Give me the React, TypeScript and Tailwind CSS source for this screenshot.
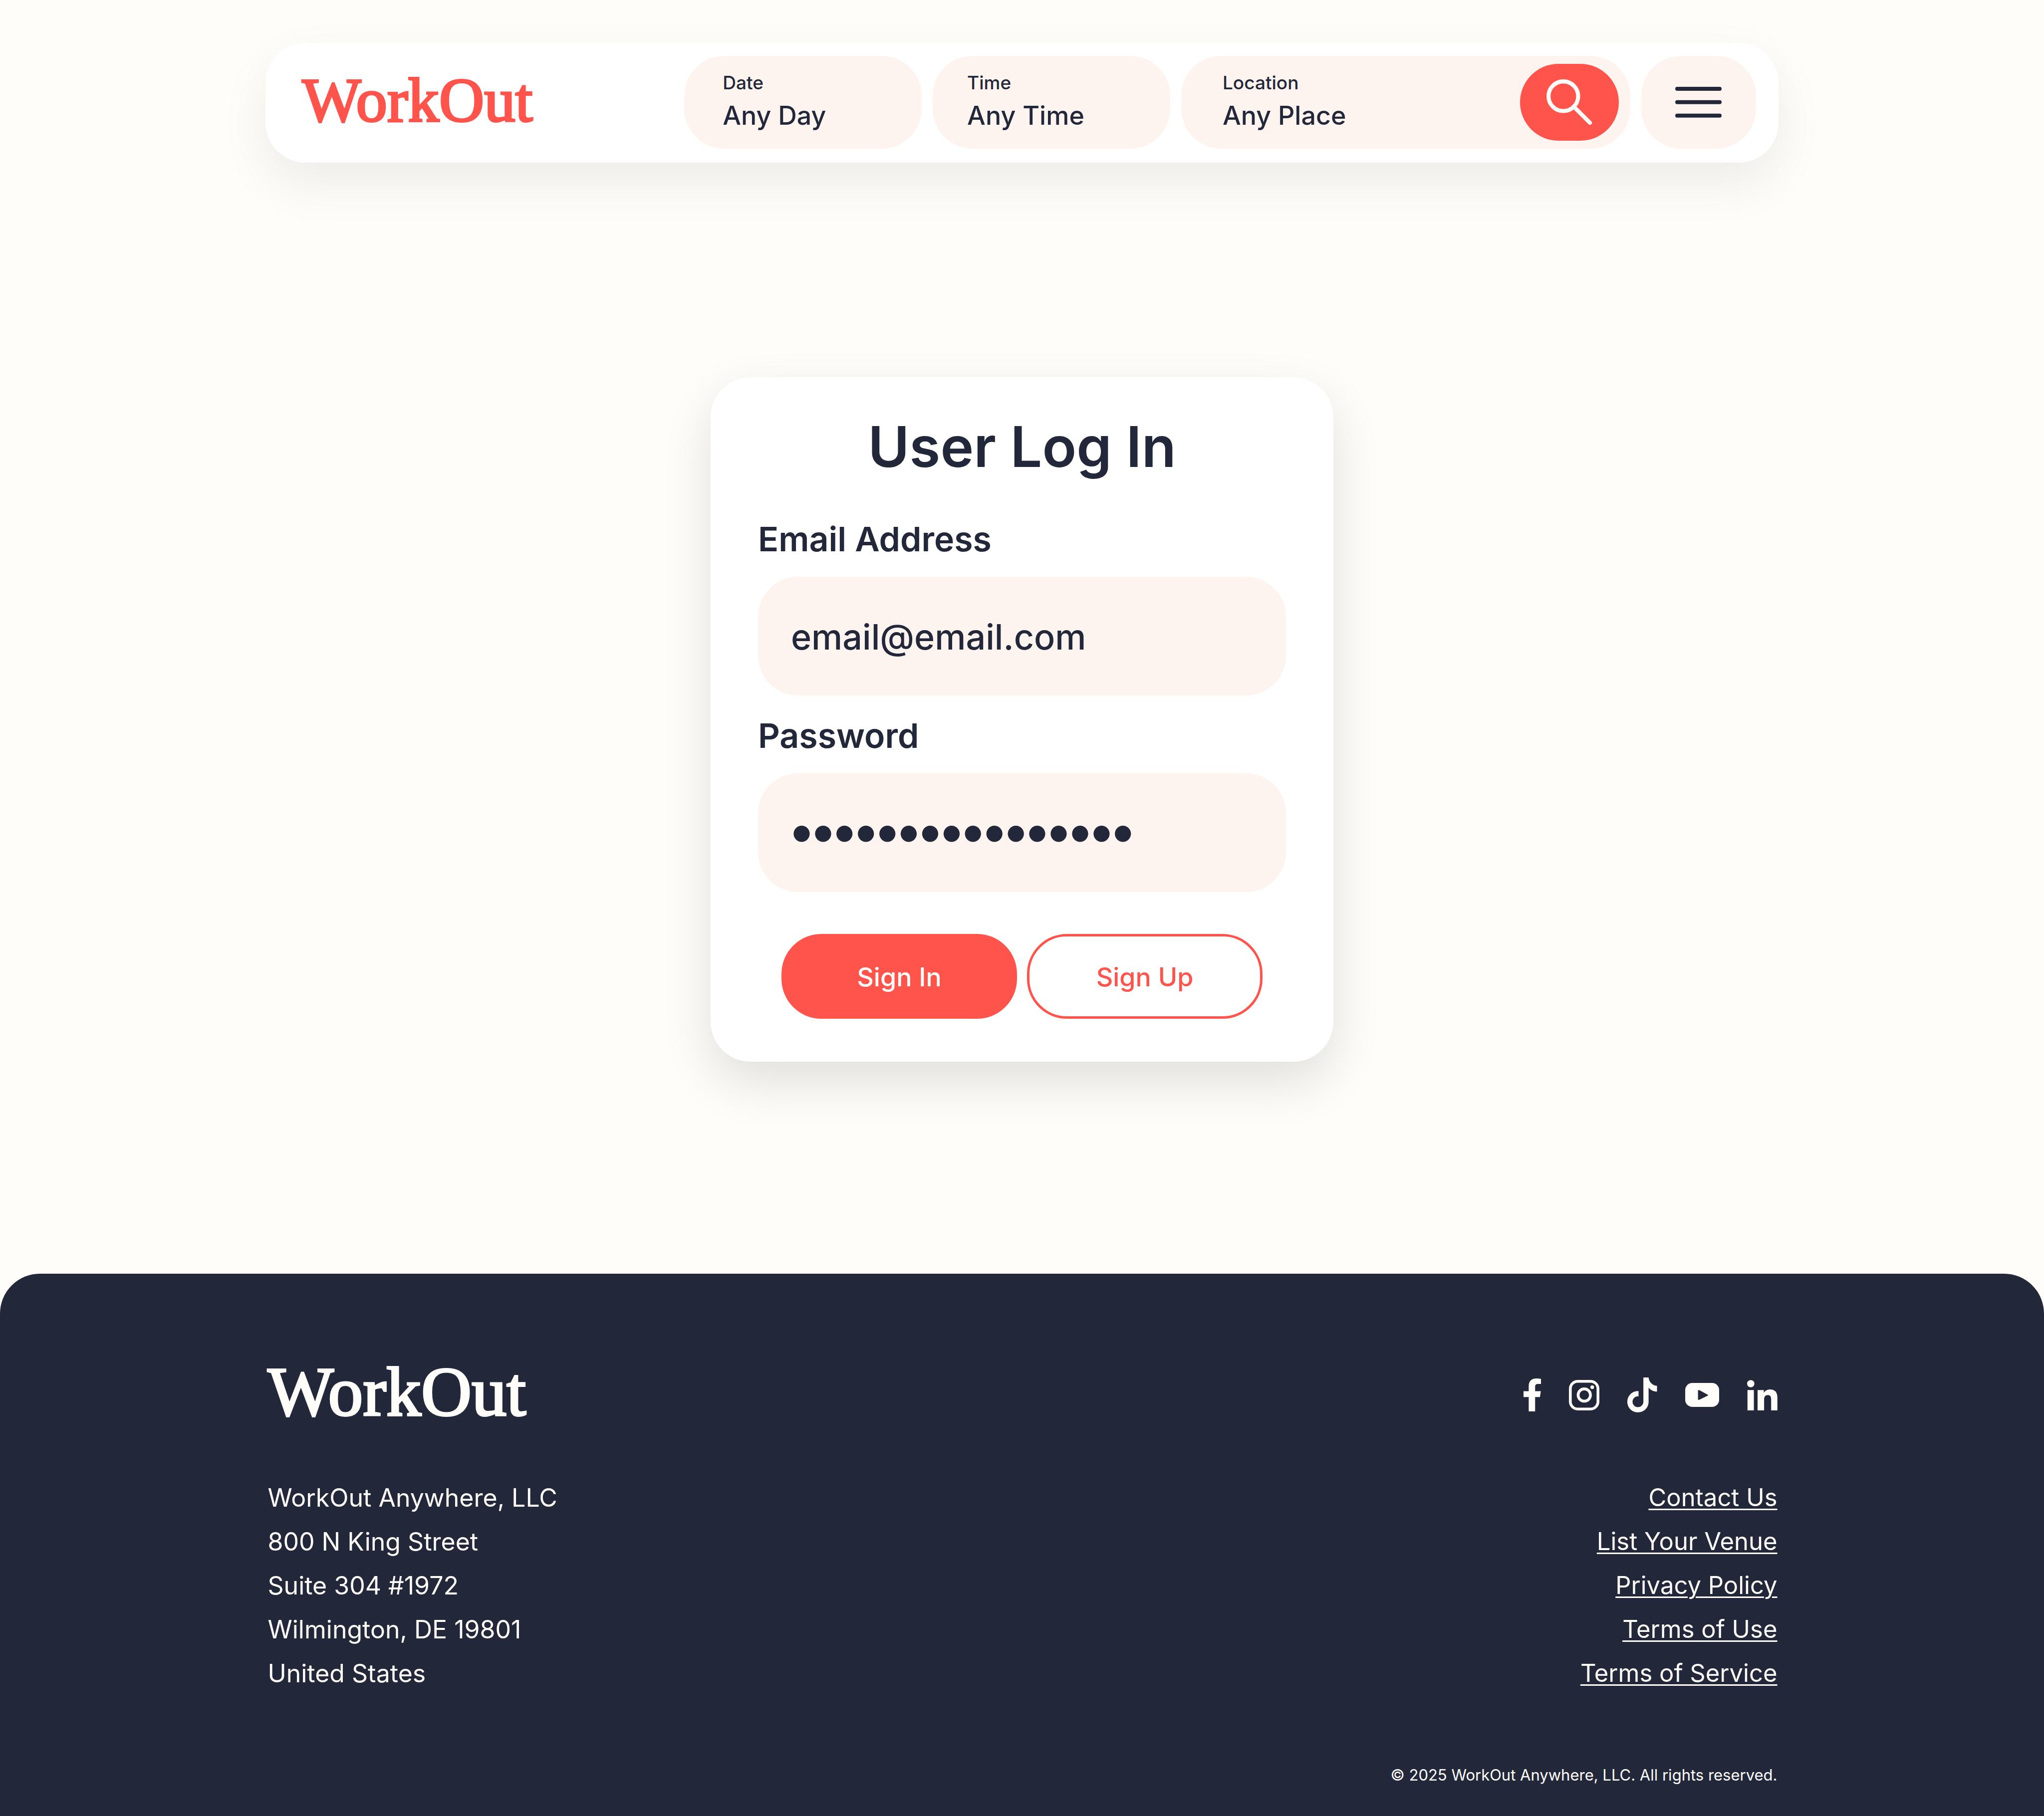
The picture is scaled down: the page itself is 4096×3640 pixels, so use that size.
import type { ReactNode } from "react";

function Logo({ className }: { className: string }) {
  return (
    <a
      href="#"
      className={`font-['Liberation_Serif',serif] whitespace-nowrap ${className}`}
    >
      WorkOut
    </a>
  );
}

function Field({
  id,
  label,
  value,
  className,
  children,
}: {
  id: string;
  label: string;
  value: string;
  className: string;
  children?: ReactNode;
}) {
  return (
    <div className={`flex h-[186px] min-w-0 rounded-[80px] bg-[#fef4ef] ${className}`}>
      <div className="flex min-w-0 flex-1 flex-col gap-2.5 pt-[30px]">
        <label htmlFor={id} className="text-[37px] leading-[48px] font-medium">
          {label}
        </label>
        <input
          id={id}
          type="text"
          defaultValue={value}
          className="w-full min-w-0 bg-transparent text-[52px] leading-[64px] font-medium outline-none"
        />
      </div>
      {children}
    </div>
  );
}

function SearchIcon() {
  return (
    <svg viewBox="0 0 113 113" className="h-[92px] w-[92px]" fill="none" stroke="currentColor" strokeWidth="10" aria-hidden="true">
      <circle cx="41.5" cy="41.5" r="36.5" />
      <path d="M67 67l40 40" strokeLinecap="round" />
    </svg>
  );
}

function MenuIcon() {
  return (
    <svg viewBox="0 0 116 77" className="w-[93px]" stroke="currentColor" strokeWidth="10" strokeLinecap="round" aria-hidden="true">
      <path d="M5 5h106M5 38.5h106M5 72h106" />
    </svg>
  );
}

function Facebook() {
  return (
    <svg viewBox="48 50 132 247" className="h-[66px]" fill="currentColor" aria-hidden="true">
      <path d="M87 297V189H48V145H87V107C87 70 108 50 143 50C158 50 170 51 180 53V91H158C142 91 135 98 135 112V145H178L171 189H135V297Z" />
    </svg>
  );
}

function Instagram() {
  return (
    <svg viewBox="388 60 230 230" className="h-[61px]" fill="none" stroke="currentColor" strokeWidth="21" aria-hidden="true">
      <rect x="398.5" y="70.5" width="209" height="209" rx="56" />
      <circle cx="504" cy="174" r="46.5" />
      <circle cx="564" cy="115" r="14" fill="currentColor" stroke="none" />
    </svg>
  );
}

function TikTok() {
  return (
    <svg viewBox="51 42 222 261" className="h-[70px]" fill="currentColor" aria-hidden="true">
      <path d="M171 42H210C213 75 238 103 273 104V147C248 147 226 137 210 118V224C210 268 175 303 130 303C86 303 51 268 51 224C51 180 86 144 130 144H135V183H130C108 183 90 201 90 224C90 246 108 264 130 264C153 264 171 246 171 224Z" />
    </svg>
  );
}

function YouTube() {
  return (
    <svg viewBox="483 81 255 180" className="h-12" aria-hidden="true">
      <rect x="483" y="81" width="255" height="180" rx="53" fill="currentColor" />
      <path
        d="M579 138Q580 134 588 134L652 169Q657 173 652 177L588 208Q580 209 579 205Z"
        fill="#222739"
      />
    </svg>
  );
}

function LinkedIn() {
  return (
    <svg viewBox="48 59 228 229" className="h-[61px]" fill="currentColor" aria-hidden="true">
      <circle cx="75.5" cy="87" r="27.5" />
      <path d="M51 135H99V288H51ZM127 135H174V156C184 139 200 130 221 130C258 130 276 152 276 195V288H229V206C229 183 221 173 204 173C186 173 176 184 176 206V288H127Z" />
    </svg>
  );
}

const socials: [string, () => ReactNode][] = [
  ["Facebook", Facebook],
  ["Instagram", Instagram],
  ["TikTok", TikTok],
  ["YouTube", YouTube],
  ["LinkedIn", LinkedIn],
];

const address = [
  "WorkOut Anywhere, LLC",
  "800 N King Street",
  "Suite 304 #1972",
  "Wilmington, DE 19801",
  "United States",
];

const links = [
  "Contact Us",
  "List Your Venue",
  "Privacy Policy",
  "Terms of Use",
  "Terms of Service",
];

export default function App() {
  return (
    <div className="flex min-h-screen flex-col bg-[#fefdf9] font-['Inter',sans-serif] text-[#222739]">
      <header className="mx-auto mt-[86px] grid w-[74%] grid-cols-[744fr_476fr_476fr_900fr_230fr] items-center gap-[22px] rounded-[80px] bg-white pt-[26px] pr-[45px] pb-7 pl-[73px] shadow-[0_40px_100px_rgba(0,0,0,0.07)]">
        <Logo className="pb-2 text-[125px] leading-[144px] text-[#ff544c] [-webkit-text-stroke:4px_#ff544c]" />
        <Field id="date" label="Date" value="Any Day" className="pl-[77px]" />
        <Field id="time" label="Time" value="Any Time" className="pl-[69px]" />
        <Field id="location" label="Location" value="Any Place" className="pl-[83px] pr-[23px]">
          <button
            type="button"
            aria-label="Search"
            className="flex h-[154px] w-[198px] shrink-0 items-center justify-center self-center rounded-full bg-[#ff544c] text-[#fefdf9]"
          >
            <SearchIcon />
          </button>
        </Field>
        <button
          type="button"
          aria-label="Menu"
          className="flex h-[186px] items-center justify-center rounded-[80px] bg-[#fef4ef]"
        >
          <MenuIcon />
        </button>
      </header>

      <main className="flex flex-1 items-center justify-center pt-1">
        <form
          className="flex w-[1248px] flex-col rounded-[80px] bg-white px-[95px] pt-[70px] pb-[86px] shadow-[0_40px_100px_rgba(0,0,0,0.12)]"
          onSubmit={(e) => e.preventDefault()}
        >
          <h1 className="text-center text-[113px] leading-[138px] font-semibold">User Log In</h1>

          <label htmlFor="email" className="mt-[74px] text-[68px] leading-[84px] font-semibold">
            Email Address
          </label>
          <input
            id="email"
            type="email"
            defaultValue="email@email.com"
            className="mt-[34px] h-[238px] rounded-[80px] bg-[#fef4ef] px-[66px] pt-1 text-[70px] font-medium outline-none"
          />

          <label htmlFor="password" className="mt-[38px] text-[68px] leading-[84px] font-semibold">
            Password
          </label>
          <input
            id="password"
            type="password"
            defaultValue="workoutanywhere1"
            className="mt-[34px] h-[238px] rounded-[80px] bg-[#fef4ef] px-[66px] pb-2 font-['Lato',sans-serif] text-[74px] font-bold outline-none"
          />

          <div className="mt-[84px] flex justify-center gap-5">
            <button
              type="submit"
              className="h-[170px] w-[472px] rounded-[80px] bg-[#ff544c] pt-1 text-[52px] font-medium text-[#fefdf9]"
            >
              Sign In
            </button>
            <button
              type="button"
              className="h-[170px] w-[472px] rounded-[80px] border-5 border-[#ff544c] pt-1 text-[52px] font-medium text-[#ff544c]"
            >
              Sign Up
            </button>
          </div>
        </form>
      </main>

      <footer className="rounded-t-[80px] bg-[#222739] pt-[157px] pb-[62px] text-[#fefdf9]">
        <div className="mx-auto w-[74%] pr-0.5 pl-1">
          <div className="flex items-center justify-between">
            <Logo className="text-[140px] leading-[160px] [-webkit-text-stroke:4px_#fefdf9]" />
            <nav aria-label="Social media" className="flex items-center gap-14 pt-3">
              {socials.map(([name, Icon]) => (
                <a key={name} href="#" aria-label={name}>
                  <Icon />
                </a>
              ))}
            </nav>
          </div>

          <div className="mt-[88px] flex justify-between text-[50px] leading-[88px]">
            <address className="not-italic">
              {address.map((line) => (
                <p key={line}>{line}</p>
              ))}
            </address>
            <ul className="text-right text-[49px]">
              {links.map((link) => (
                <li key={link}>
                  <a href="#" className="underline decoration-3 underline-offset-5">
                    {link}
                  </a>
                </li>
              ))}
            </ul>
          </div>

          <p className="mt-[140px] text-right text-[31px] leading-10">
            © 2025 WorkOut Anywhere, LLC. All rights reserved.
          </p>
        </div>
      </footer>
    </div>
  );
}
